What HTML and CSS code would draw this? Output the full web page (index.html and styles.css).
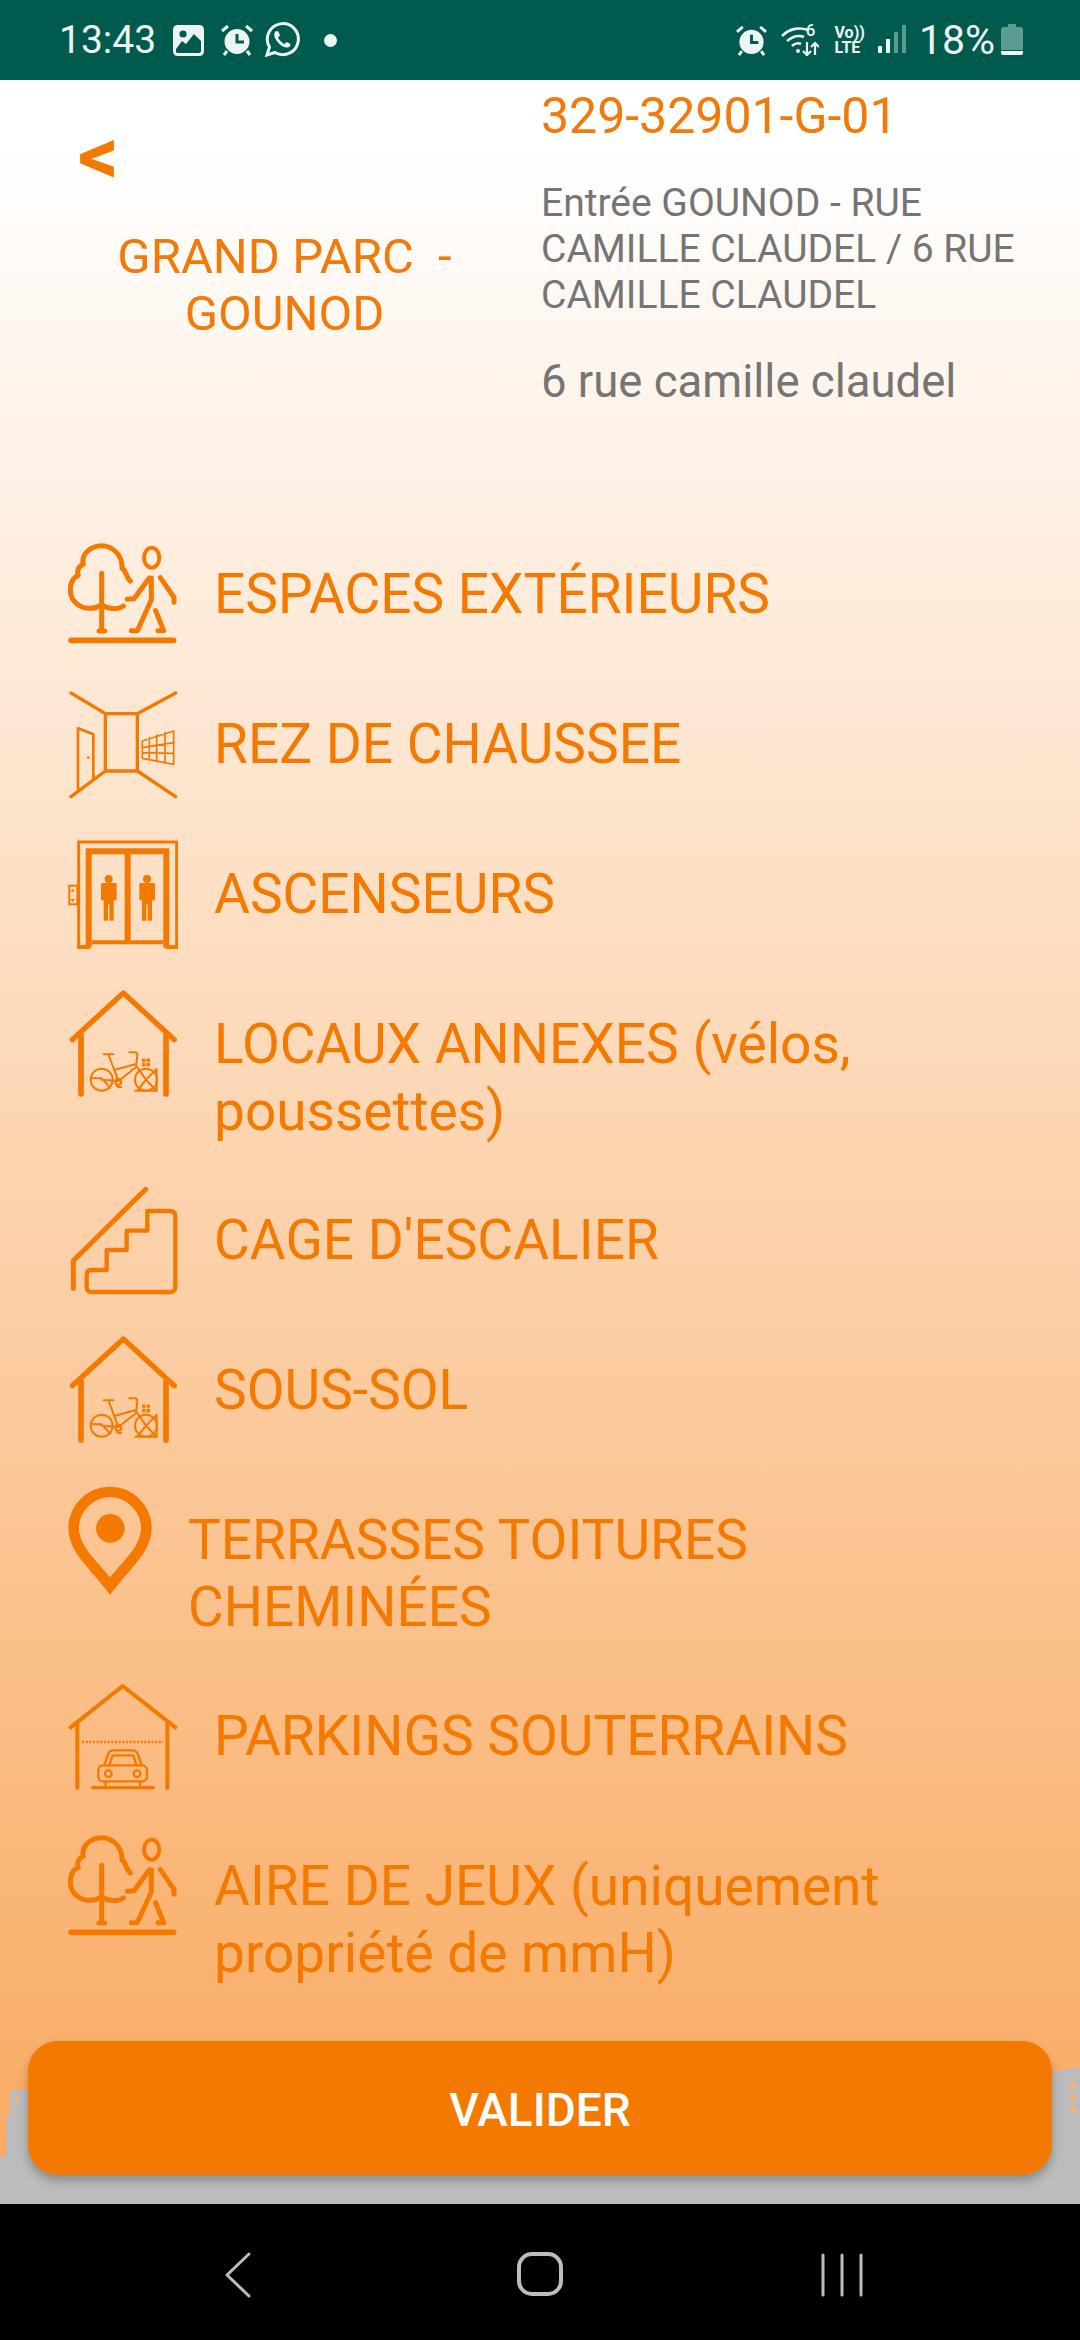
FILE: index.html
```html
<!DOCTYPE html>
<html lang="fr">
<head>
  <meta charset="UTF-8" />
  <meta name="viewport" content="width=device-width, initial-scale=1.0"/>
  <title>Visite - GRAND PARC - GOUNOD</title>
  <link rel="stylesheet" href="styles.css">
</head>
<body>
  <svg class="defs" width="0" height="0">
    <defs>
      <g id="walker" fill="none" stroke="#f47900" stroke-width="15" stroke-linecap="round" stroke-linejoin="round">
        <path d="M241 183C226 170 230 152 216 145C218 108 190 77 155 77C120 77 93 105 100 132C76 145 84 166 85 166C64 175 61 195 61 210C61 245 90 265 120 265C138 265 155 255 155 255C172 265 200 272 220 258"/>
        <path d="M155 160V333M147 333H164"/>
        <path d="M63 361H371" stroke-width="17"/>
        <ellipse cx="305" cy="113" rx="23" ry="30" stroke-width="12"/>
        <path d="M232 238L252 236L298 174H304V240L262 332H244"/>
        <path d="M331 173L372 232V247M317 272L341 332H324"/>
      </g>
      <g id="bikehouse" fill="none" stroke="#f47900" stroke-linecap="round" stroke-linejoin="round">
        <path d="M67 662L220 522L373 662" stroke-width="16"/>
        <path d="M93 650V825M348 650V825" stroke-width="17"/>
        <g stroke-width="6">
          <circle cx="155" cy="782" r="33"/>
          <circle cx="288" cy="782" r="33"/>
          <path d="M123 778H155L180 806M161 706H190M176 708L205 786L155 782M193 752L205 786L258 745L262 708Q262 700 254 700H238M195 752L258 735M262 745L288 782L262 815M256 815H320V750L288 782L316 812"/>
          <circle cx="205" cy="788" r="9"/>
          <path d="M200 800Q205 806 214 804"/>
        </g>
        <rect x="276" y="719" width="24" height="23" fill="#f47900" stroke="none"/>
        <path d="M288 719V742M276 730H300" stroke="#fcd3ab" stroke-width="3"/>
      </g>
    </defs>
  </svg>

  <div class="phone">
    <header class="statusbar">
      <div class="status-group">
        <span class="clock">13:43</span>
        <svg class="st-icon picture" viewBox="0 0 31 31"><path fill="#edf5f3" fill-rule="evenodd" d="M5 0H26Q31 0 31 5V26Q31 31 26 31H5Q0 31 0 26V5Q0 0 5 0ZM3 24V27Q3 28 5 28H26Q28 28 28 26V16L21 9L13 19L9 16Z"/><circle cx="10" cy="9" r="3.6" fill="#005a4e"/></svg>
        <svg class="st-icon alarm" viewBox="0 0 32 32"><path fill="#edf5f3" d="M16 5A12.500 12.500 0 1 0 16 30A12.500 12.500 0 1 0 16 5Z"/><path d="M16 10V18H23" fill="none" stroke="#005a4e" stroke-width="3"/><path d="M1 7L7 2M31 7L25 2M6 27L3 31M26 27L29 31" stroke="#edf5f3" stroke-width="3"/></svg>
        <svg class="st-icon whatsapp" viewBox="0 0 36 36"><path fill="none" stroke="#edf5f3" stroke-width="3" d="M3 33L5.500 25A15.500 15.500 0 1 1 11 30.500Z"/><path fill="#edf5f3" d="M12 9C9 11 10 16 14 20.500C18 25 23 27 26 24.500L26.500 22L22.500 20L20.500 22C18 21 15 18 14 15.500L16 13.500L14.500 9.500Z"/></svg>
        <span class="dot"></span>
      </div>
      <div class="status-group">
        <svg class="st-icon alarm-right" viewBox="0 0 32 32"><path fill="#edf5f3" d="M16 5A12.500 12.500 0 1 0 16 30A12.500 12.500 0 1 0 16 5Z"/><path d="M16 10V18H23" fill="none" stroke="#005a4e" stroke-width="3"/><path d="M1 7L7 2M31 7L25 2M6 27L3 31M26 27L29 31" stroke="#edf5f3" stroke-width="3"/></svg>
        <span class="wifi">
          <svg class="wifi-arcs" viewBox="0 0 38 32"><path fill="none" stroke="#edf5f3" stroke-width="2.600" d="M1 12C9 4 19 3 27 6M6 17C12 12 18 11 23 13M11 22C14 19 18 19 20 20"/><circle cx="17" cy="27" r="2" fill="#edf5f3"/><path fill="none" stroke="#edf5f3" stroke-width="2.200" d="M26 18V31M22 27L26 31L30 27M34 31V19M30 23L34 19L38 23"/></svg>
          <span class="wifi-six">6</span>
        </span>
        <span class="volte"><span>Vo))</span><span>LTE</span></span>
        <svg class="st-icon signal" viewBox="0 0 29 30"><rect x="0" y="21" width="4" height="7" fill="#edf5f3"/><rect x="8" y="14" width="4" height="14" fill="#edf5f3"/><rect x="16" y="7" width="4" height="21" fill="#5b9c91"/><rect x="24" y="0" width="4" height="28" fill="#5b9c91"/></svg>
        <span class="battery-pct">18%</span>
        <svg class="st-icon battery" viewBox="0 0 22 32"><path fill="#5b9c91" d="M7 0H15V3H19Q22 3 22 6V26H0V6Q0 3 3 3H7Z"/><path fill="#edf5f3" d="M0 27H22V29Q22 31 19 31H3Q0 31 0 29Z"/></svg>
      </div>
    </header>

    <main class="screen">
      <section class="head">
        <div class="head-left">
          <a class="back">&lt;</a>
          <h1 class="site-name">GRAND PARC &nbsp;-<br>GOUNOD</h1>
        </div>
        <div class="head-right">
          <div class="code">329-32901-G-01</div>
          <div class="entry">Entrée GOUNOD - RUE CAMILLE CLAUDEL / 6 RUE CAMILLE CLAUDEL</div>
          <div class="address">6 rue camille claudel</div>
        </div>
      </section>

      <ul class="places">
        <li class="place">
          <svg class="place-icon" viewBox="54 57 330 330"><use href="#walker"/></svg>
          <span class="place-label">ESPACES EXTÉRIEURS</span>
        </li>
        <li class="place">
          <svg class="place-icon" viewBox="54 504 330 330" fill="none" stroke="#f47900" stroke-linecap="round" stroke-linejoin="round">
            <path stroke-width="10" d="M63 516L166 578H262L377 516M63 827L166 750H262L377 827M166 578V750M262 578V750"/>
            <path stroke-width="8" d="M84 803V622L130 640V775"/>
            <circle cx="115" cy="710" r="4" fill="#f47900" stroke="none"/>
            <path stroke-width="5" d="M277 660L371 630V730L277 712ZM277 680L371 665M277 695L371 697M298 650V716M320 642V721M345 635V726"/>
          </svg>
          <span class="place-label">REZ DE CHAUSSEE</span>
        </li>
        <li class="place">
          <svg class="place-icon" viewBox="54 54 330 330" fill="#f47900" stroke="#f47900">
            <path fill="none" stroke-width="9" d="M86 385V63H380V385"/>
            <path fill="none" stroke-width="18" d="M116 380V91H349V380M233 91V362"/>
            <path fill="none" stroke-width="12" d="M125 364H340"/>
            <path stroke="none" d="M82 372H120V386H82ZM347 372H384V386H347Z"/>
            <rect x="58" y="194" width="24" height="56" fill="none" stroke-width="6"/>
            <path stroke="none" d="M68 203L75 212H61ZM68 243L75 234H61Z"/>
            <g stroke="none">
              <circle cx="176" cy="174" r="12"/>
              <path d="M157 186H196Q200 186 200 190V238H191V299H178V250H174V299H161V238H153V190Q153 186 157 186Z"/>
              <circle cx="291" cy="174" r="12"/>
              <path d="M272 186H311Q315 186 315 190V238H306V299H293V250H289V299H276V238H268V190Q268 186 272 186Z"/>
            </g>
          </svg>
          <span class="place-label">ASCENSEURS</span>
        </li>
        <li class="place">
          <svg class="place-icon" viewBox="54 510 330 330"><use href="#bikehouse"/></svg>
          <span class="place-label">LOCAUX ANNEXES (vélos, poussettes)</span>
        </li>
        <li class="place">
          <svg class="place-icon" viewBox="54 45 330 330" fill="none" stroke="#f47900" stroke-linecap="round" stroke-linejoin="round">
            <path stroke-width="15" d="M287 58L70 272V355"/>
            <path stroke-width="13" d="M292 123H360Q376 123 376 139V350Q376 366 360 366H125Q110 366 110 350V316Q110 300 125 300H170V240H230V182H292Z"/>
          </svg>
          <span class="place-label">CAGE D'ESCALIER</span>
        </li>
        <li class="place">
          <svg class="place-icon" viewBox="54 510 330 330"><use href="#bikehouse"/></svg>
          <span class="place-label">SOUS-SOL</span>
        </li>
        <li class="place">
          <svg class="place-icon place-icon-pin" viewBox="54 42 252 330" fill="none" stroke="#f47900">
            <path stroke-width="32" d="M180 345C130 280 71 235 71 172A109 109 0 0 1 289 172C289 235 230 280 180 345Z"/>
            <circle cx="181" cy="172" r="43" fill="#f47900" stroke="none"/>
          </svg>
          <span class="place-label">TERRASSES TOITURES CHEMINÉES</span>
        </li>
        <li class="place">
          <svg class="place-icon" viewBox="54 627 330 330" fill="none" stroke="#f47900" stroke-linecap="round" stroke-linejoin="round">
            <path stroke-width="12" d="M62 766L218 642L376 766M82 755V948M352 755V948"/>
            <path stroke-width="8" stroke-linecap="butt" stroke-dasharray="6 5" d="M96 810H340"/>
            <path stroke-width="10" d="M128 947H310"/>
            <g stroke-width="7">
              <path d="M163 880L174 847Q178 835 190 835H248Q260 835 264 847L275 880M178 880L188 850H250L260 880"/>
              <rect x="145" y="880" width="146" height="48" rx="14"/>
              <circle cx="175" cy="905" r="10"/>
              <circle cx="261" cy="905" r="10"/>
              <path d="M167 928V945M270 928V945"/>
            </g>
          </svg>
          <span class="place-label">PARKINGS SOUTERRAINS</span>
        </li>
        <li class="place">
          <svg class="place-icon" viewBox="54 57 330 330"><use href="#walker"/></svg>
          <span class="place-label">AIRE DE JEUX (uniquement propriété de mmH)</span>
        </li>
      </ul>

      <footer class="actions">
        <svg class="skyline" viewBox="0 0 1080 163"><path fill="#bcbcbc" d="M0 116H6V74H10V49H28V60H1052V30L1080 26V163H0Z"/><path fill="#f9b271" d="M15 56H18V63H15ZM1070 41H1075V47H1070ZM1070 54H1075V60H1070ZM1070 65H1075V72H1070Z"/></svg>
        <button class="validate">VALIDER</button>
      </footer>
    </main>

    <nav class="navbar">
      <svg class="nav-icon" viewBox="0 0 26 46" width="26" height="46"><path fill="none" stroke="#bdbdbd" stroke-width="3" stroke-linecap="round" stroke-linejoin="round" d="M24 2L2 23L24 44"/></svg>
      <svg class="nav-icon" viewBox="0 0 46 46" width="46" height="46"><rect x="2" y="2" width="42" height="40" rx="13" fill="none" stroke="#bdbdbd" stroke-width="4"/></svg>
      <svg class="nav-icon" viewBox="0 0 42 44" width="42" height="44"><path fill="none" stroke="#bdbdbd" stroke-width="3" stroke-linecap="round" d="M2 2V42M21 2V42M40 2V42"/></svg>
    </nav>
  </div>
</body>
</html>
```

FILE: styles.css
```css
* { box-sizing: border-box; }

html, body {
  margin: 0;
  padding: 0;
}

body {
  font-family: Roboto, sans-serif;
  background: #000;
}

.defs { position: absolute; }

.phone {
  width: 1080px;
  height: 2340px;
  display: flex;
  flex-direction: column;
  overflow: hidden;
}

/* status bar */
.statusbar {
  height: 80px;
  flex: none;
  background: #005a4e;
  color: #edf5f3;
  display: flex;
  justify-content: space-between;
  align-items: center;
  padding: 0 57px 0 59px;
}

.status-group {
  display: flex;
  align-items: center;
}

.clock, .battery-pct {
  font-size: 39px;
  line-height: 44px;
}

.st-icon { display: block; flex: none; }
.picture { width: 31px; height: 31px; margin-left: 17px; }
.alarm { width: 32px; height: 32px; margin-left: 17px; }
.whatsapp { width: 36px; height: 36px; margin-left: 11px; }
.dot { width: 13px; height: 13px; border-radius: 50%; background: #edf5f3; margin-left: 24px; }
.alarm-right { width: 31px; height: 31px; }
.signal { width: 29px; height: 30px; margin-left: 13px; }
.battery { width: 22px; height: 32px; margin-left: 6px; }
.battery-pct { margin-left: 12px; font-size: 41px; }

.wifi {
  position: relative;
  width: 38px;
  height: 32px;
  margin-left: 14px;
  display: block;
}

.wifi-arcs { width: 38px; height: 32px; display: block; }

.wifi-six {
  position: absolute;
  right: 3px;
  top: -4px;
  font-size: 17px;
  font-weight: 500;
  line-height: 20px;
}

.volte {
  display: flex;
  flex-direction: column;
  margin-left: 16px;
  font-size: 16px;
  font-weight: 700;
  line-height: 15px;
}

/* main screen */
.screen {
  flex: 1;
  display: flex;
  flex-direction: column;
  background: linear-gradient(to bottom, #fff 60px, #f9ab63 2070px);
}

.head {
  height: 459px;
  flex: none;
  display: flex;
}

.head-left {
  width: 541px;
  padding: 41px 0 0 28px;
}

.back {
  display: block;
  margin-left: 50px;
  color: #f47900;
  font-size: 80px;
  font-weight: 700;
  line-height: 70px;
}

.site-name {
  margin: 37px 0 0;
  color: #f27a0a;
  font-size: 49px;
  font-weight: 400;
  line-height: 57px;
  text-align: center;
}

.head-right {
  flex: 1;
  padding-right: 20px;
}

.code {
  margin-top: 9px;
  color: #f27a0a;
  font-size: 50px;
  line-height: 54px;
}

.entry {
  margin-top: 37px;
  color: #757575;
  font-size: 39px;
  line-height: 46px;
}

.address {
  margin-top: 40px;
  color: #757575;
  font-size: 45.500px;
  line-height: 48px;
}

/* list */
.places {
  list-style: none;
  margin: 0;
  padding: 0 40px 0 68px;
  display: flex;
  flex-direction: column;
  gap: 40px;
}

.place {
  display: flex;
  align-items: flex-start;
  gap: 36px;
}

.place-icon {
  width: 110px;
  height: 110px;
  flex: none;
}

.place-icon-pin {
  width: 84px;
}

.place-label {
  padding-top: 22px;
  color: #f47900;
  font-size: 55px;
  line-height: 67px;
}

/* bottom button */
.actions {
  position: relative;
  margin-top: auto;
  padding: 0 28px 29px;
}

.skyline {
  position: absolute;
  left: 0;
  top: 0;
  width: 1080px;
  height: 163px;
}

.validate {
  position: relative;
  display: block;
  width: 100%;
  height: 134px;
  padding-top: 5px;
  border: none;
  border-radius: 30px;
  background: #f47900;
  color: #fff;
  font-family: Roboto, sans-serif;
  font-size: 46px;
  font-weight: 500;
  box-shadow: 0 6px 10px rgba(0,0,0,0.25);
}

/* nav bar */
.navbar {
  height: 136px;
  flex: none;
  background: #000;
  display: flex;
  align-items: center;
  padding: 6px 0 0 225px;
}

.nav-icon { display: block; flex: none; }
.nav-icon:nth-child(2) { margin-left: 266px; }
.nav-icon:nth-child(3) { margin-left: 258px; }
```
